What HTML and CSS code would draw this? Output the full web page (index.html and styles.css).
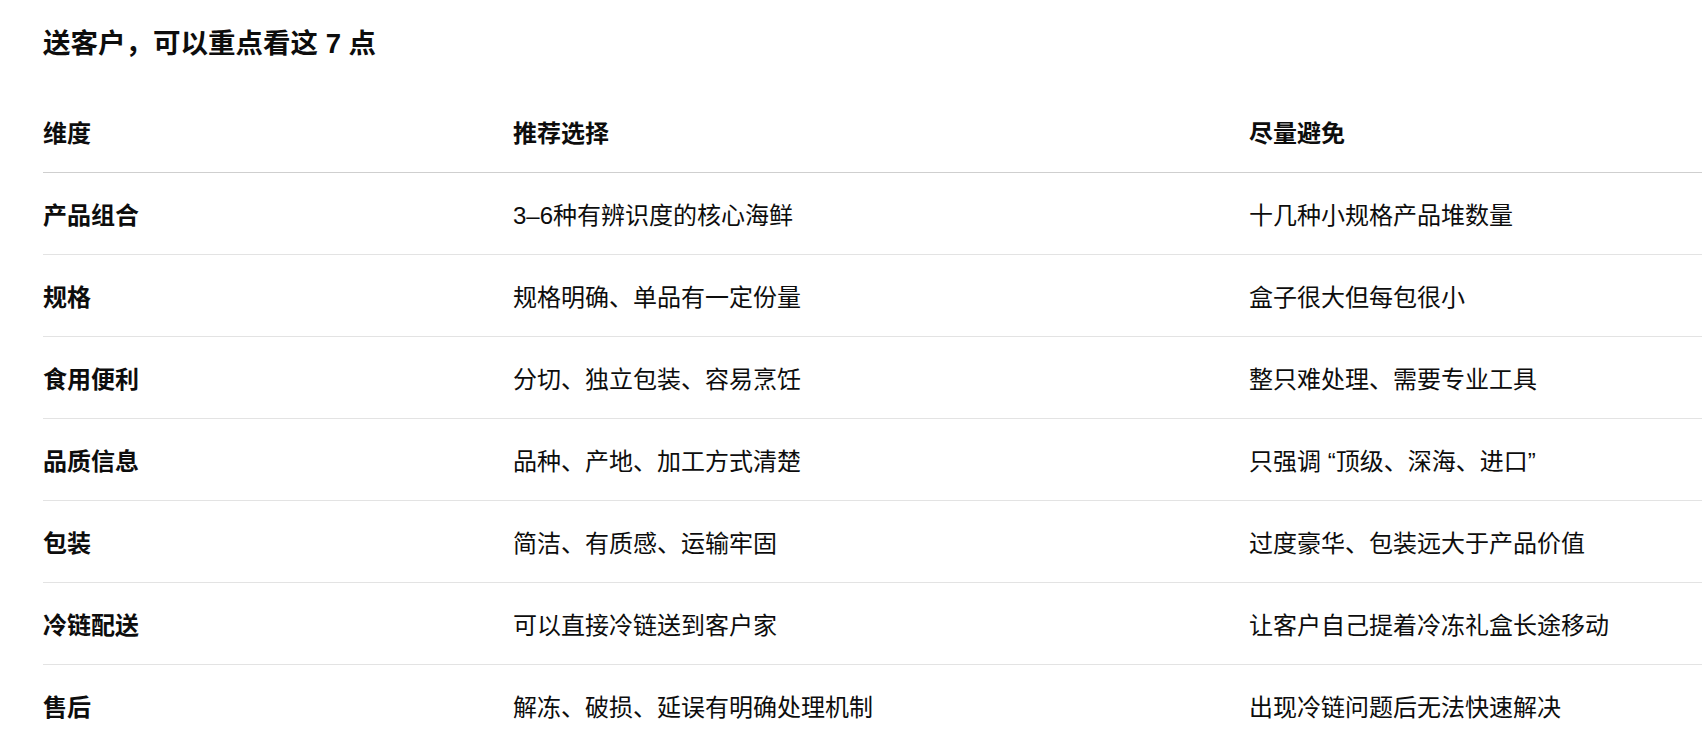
FILE: index.html
```html
<!DOCTYPE html>
<html lang="zh-CN">
<head>
<meta charset="utf-8">
<title>送客户，可以重点看这 7 点</title>
<link rel="stylesheet" href="styles.css">
</head>
<body>
<main class="page">
  <h3 class="title">送客户，可以重点看这 7 点</h3>
  <table class="guide">
    <thead>
      <tr>
        <th class="col-dim">维度</th>
        <th class="col-rec">推荐选择</th>
        <th class="col-avoid">尽量避免</th>
      </tr>
    </thead>
    <tbody>
      <tr><td>产品组合</td><td>3–6种有辨识度的核心海鲜</td><td>十几种小规格产品堆数量</td></tr>
      <tr><td>规格</td><td>规格明确、单品有一定份量</td><td>盒子很大但每包很小</td></tr>
      <tr><td>食用便利</td><td>分切、独立包装、容易烹饪</td><td>整只难处理、需要专业工具</td></tr>
      <tr><td>品质信息</td><td>品种、产地、加工方式清楚</td><td>只强调 “顶级、深海、进口”</td></tr>
      <tr><td>包装</td><td>简洁、有质感、运输牢固</td><td>过度豪华、包装远大于产品价值</td></tr>
      <tr><td>冷链配送</td><td>可以直接冷链送到客户家</td><td>让客户自己提着冷冻礼盒长途移动</td></tr>
      <tr><td>售后</td><td>解冻、破损、延误有明确处理机制</td><td>出现冷链问题后无法快速解决</td></tr>
    </tbody>
  </table>
</main>
</body>
</html>
```

FILE: styles.css
```css
html, body {
  margin: 0;
  padding: 0;
  background: #ffffff;
  overflow: hidden;
}

body {
  font-family: "Liberation Sans", "Noto Sans CJK SC", sans-serif;
  color: #0d0d0d;
}

.page {
  padding: 26px 0 0 43px;
}

.title {
  margin: 0 0 30px 0;
  font-size: 27.5px;
  line-height: 35px;
  font-weight: 700;
}

.guide {
  border-collapse: collapse;
  width: 1700px;
  table-layout: fixed;
  font-size: 24px;
  line-height: 35px;
}

.guide th,
.guide td {
  text-align: left;
  padding: 25px 0 21px 0;
  vertical-align: middle;
  white-space: nowrap;
}

.guide th {
  font-weight: 700;
  border-bottom: 1px solid #cfcfcf;
}

.guide td {
  font-weight: 400;
  border-bottom: 1px solid #e3e3e3;
}

.guide tbody tr:last-child td {
  border-bottom: none;
}

.guide td:first-child {
  font-weight: 700;
}

.col-dim { width: 470px; }
.col-rec { width: 736px; }
.col-avoid { width: auto; }
```
